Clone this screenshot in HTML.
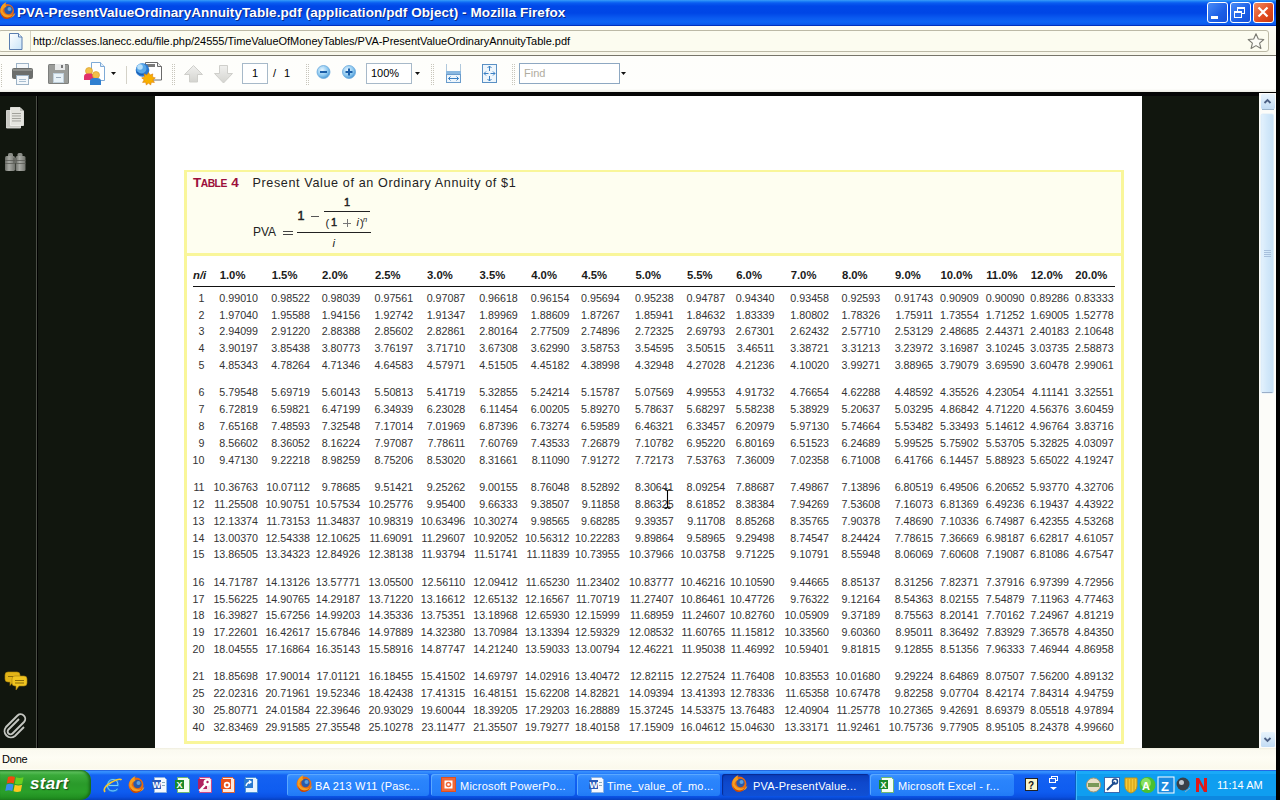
<!DOCTYPE html>
<html><head><meta charset="utf-8">
<style>
*{margin:0;padding:0;box-sizing:border-box}
html,body{width:1280px;height:800px;overflow:hidden;background:#000}
body{position:relative;font-family:"Liberation Sans",sans-serif}
.a{position:absolute}
/* title bar */
#title{left:0;top:0;width:1276px;height:26px;background:linear-gradient(#3a9ef8 0,#1a7cf6 1.5px,#0a5cf0 3px,#0048e8 6px,#0046e6 13px,#0a5af0 18px,#0d64f4 22px,#0a58ec 24.5px,#0032c0 25px,#0030b8 26px)}
#ttext{left:17px;top:4px;color:#fff;font-weight:bold;font-size:13.5px;line-height:17px;white-space:nowrap;text-shadow:1px 1px 0 #0a2a8a;letter-spacing:0.08px}
.wb{top:2px;width:21px;height:21px;border:1px solid #fff;border-radius:3px;background:linear-gradient(135deg,#4a8cf7,#1c5fe6 60%,#1650d8)}
#wclose{background:linear-gradient(135deg,#f08a60,#e04a20 60%,#c83a10)}
/* url area */
#urlarea{left:0;top:26px;width:1276px;height:30px;background:linear-gradient(#fdfdf6,#f8f7ea)}
#urlbox{left:-2px;top:30px;width:1271px;height:22px;border:1px solid #bcb9a6;border-radius:3px;background:#fcfcf0}
#urlsep{left:30px;top:31px;width:1px;height:20px;background:#d6d3c2}
#urltext{left:33px;top:35px;font-size:11px;color:#000;white-space:nowrap;letter-spacing:-0.03px}
#urlline{left:0;top:55px;width:1276px;height:1px;background:#77756a}
/* toolbar */
#toolbar{left:0;top:56px;width:1276px;height:36px;background:linear-gradient(#fefefb 0,#fefefc 33px,#f2f2ec 35px,#e8e8e0 36px)}
#blackband{left:0;top:92px;width:1276px;height:4px;background:#050505}
/* content */
#content{left:0;top:96px;width:1276px;height:652px;background:#11160e}
#sideline{left:36px;top:96px;width:1px;height:652px;background:#4a4d45}
#sideline2{left:37px;top:96px;width:1px;height:652px;background:#000}
#page{left:155px;top:96px;width:987px;height:652px;background:#fff}
#sbar{left:1259px;top:96px;width:17px;height:652px;background:#fdfdfa}
#status{left:0;top:748px;width:1276px;height:22px;background:linear-gradient(#efedde 0,#fbfaf0 2px,#fefdf4 10px,#fbf9ec 21px,#ffffff 22px)}
#done{left:2px;top:753px;font-size:11px;color:#000;letter-spacing:-0.2px}
#taskbar{left:0;top:770px;width:1276px;height:30px;background:linear-gradient(#0e40c8 0,#3a92ff 1px,#2c86fc 3px,#1462f2 5px,#0e5cf0 22px,#0a50e2 27px,#0640c0 30px)}
.tb{position:absolute;top:774px;height:22px;border-radius:3px;background:linear-gradient(#3e94ff,#2a84fc 30%,#2680fa 80%,#207af6);box-shadow:inset 1px 1px 0 #5aa8ff}
.tbt{position:absolute;top:779.5px;font-size:11px;letter-spacing:0.22px;line-height:13px;color:#fff;white-space:nowrap}
/* pdf */
#ybox{left:184px;top:170px;width:940px;height:574px;border:3px solid #f9f69a;background:#fff}
#yhead{left:187px;top:172px;width:934px;height:81px;background:#fefef0}
#ysep{left:187px;top:253px;width:934px;height:3px;background:#f9f69a}
.v,.n{position:absolute;width:60px;text-align:right;font-size:10.7px;line-height:12px;color:#333;white-space:nowrap}
.h{position:absolute;top:268.7px;font-size:11.3px;line-height:12px;font-weight:bold;color:#1a1a1a;white-space:nowrap}
#rule{left:193px;top:286px;width:922px;height:1px;background:#111}
</style></head><body>
<div id="title" class="a"></div>
<div id="ttext" class="a">PVA-PresentValueOrdinaryAnnuityTable.pdf (application/pdf Object) - Mozilla Firefox</div>
<div class="a wb" style="left:1207px"></div>
<div class="a wb" style="left:1230px"></div>
<div id="wclose" class="a wb" style="left:1253px"></div>

<div id="urlarea" class="a"></div>
<div id="urlbox" class="a"></div>
<div id="urlsep" class="a"></div>
<div id="urltext" class="a">http://classes.lanecc.edu/file.php/24555/TimeValueOfMoneyTables/PVA-PresentValueOrdinaryAnnuityTable.pdf</div>
<div id="urlline" class="a"></div>
<!-- title icons -->
<svg class="a" style="left:0;top:0" width="1276" height="56" viewBox="0 0 1276 56">
 <defs>
  <radialGradient id="gff" cx="0.45" cy="0.4" r="0.6"><stop offset="0" stop-color="#ffd24a"/><stop offset="0.6" stop-color="#f08a10"/><stop offset="1" stop-color="#c84a08"/></radialGradient>
  <linearGradient id="gdoc" x1="0" y1="0" x2="1" y2="1"><stop offset="0" stop-color="#ffffff"/><stop offset="1" stop-color="#c8e4f8"/></linearGradient>
 </defs>
 <circle cx="7" cy="11" r="7" fill="#e86a10"/>
 <circle cx="8.5" cy="10" r="4.2" fill="#2a5aa8"/>
 <circle cx="9.5" cy="9" r="2" fill="#5aa0e0"/>
 <path d="M0.5 9q1-5 6-7q-2 3 0 5q-3 0-4 4q2 4 7 4.5q4 0 6-3q-1 5-7 5.5q-6 0-8-6z" fill="#f4a020"/>
 <path d="M1 13q2 4 6 4.5q4 0 6.5-3.5q-1.5 4.5-6.5 5q-5 0-6-6z" fill="#c84808"/>
 <!-- window button glyphs -->
 <rect x="1211" y="16" width="7" height="3" fill="#fff"/>
 <rect x="1237.5" y="7.5" width="7" height="6" fill="none" stroke="#fff" stroke-width="1"/>
 <rect x="1237" y="7" width="8" height="2" fill="#fff"/>
 <rect x="1234.5" y="11.5" width="7" height="6" fill="#2a6ae8" stroke="#fff" stroke-width="1"/>
 <rect x="1234" y="11" width="8" height="2" fill="#fff"/>
 <path d="M1258.5 7.5l9 9M1267.5 7.5l-9 9" stroke="#fff" stroke-width="2.2"/>
 <!-- url page icon -->
 <path d="M9.5 33.5h9l3.5 3.5v12.5h-12.5z" fill="url(#gdoc)" stroke="#5a7eb0" stroke-width="1"/>
 <path d="M18.5 33.5v3.5h3.5" fill="#e8f0f8" stroke="#5a7eb0" stroke-width="1"/>
 <!-- star -->
 <path d="M1256 33.8l2.3 5.2 5.5.5-4.2 3.6 1.3 5.4-4.9-2.9-4.9 2.9 1.3-5.4-4.2-3.6 5.5-.5z" fill="#fbfbf6" stroke="#7a7a72" stroke-width="1.1" stroke-linejoin="round"/>
</svg>


<div id="toolbar" class="a"></div>
<div id="blackband" class="a"></div>
<!-- toolbar -->
<svg class="a" style="left:0;top:56px" width="640" height="36" viewBox="0 56 640 36">
 <defs>
  <linearGradient id="gblue" x1="0" y1="0" x2="0" y2="1"><stop offset="0" stop-color="#d8ecfb"/><stop offset="1" stop-color="#7fb6e6"/></linearGradient>
  <radialGradient id="gzoom" cx="0.4" cy="0.35" r="0.7"><stop offset="0" stop-color="#e8f6ff"/><stop offset="0.6" stop-color="#8cc8f0"/><stop offset="1" stop-color="#3f8fd0"/></radialGradient>
  <linearGradient id="garrow" x1="0" y1="0" x2="0" y2="1"><stop offset="0" stop-color="#f0f0ee"/><stop offset="1" stop-color="#d4d4d0"/></linearGradient>
 </defs>
 <!-- grip -->
 <g fill="#c6c4b8"><rect x="1" y="64" width="1" height="1"/><rect x="1" y="66" width="1" height="1"/><rect x="1" y="68" width="1" height="1"/><rect x="1" y="70" width="1" height="1"/><rect x="1" y="72" width="1" height="1"/><rect x="1" y="74" width="1" height="1"/><rect x="1" y="76" width="1" height="1"/><rect x="1" y="78" width="1" height="1"/><rect x="1" y="80" width="1" height="1"/><rect x="1" y="82" width="1" height="1"/><rect x="1" y="84" width="1" height="1"/><rect x="1" y="86" width="1" height="1"/></g>
 <!-- printer -->
 <rect x="16.5" y="63.5" width="12" height="7" fill="#f4f8fb" stroke="#9db3c6"/>
 <rect x="12" y="68" width="21" height="11" rx="2" fill="#6c6e6c"/>
 <rect x="13" y="69" width="19" height="2" fill="#8d8f8c"/>
 <rect x="16.5" y="75.5" width="12" height="9" fill="#f4f8fb" stroke="#9db3c6"/>
 <rect x="19" y="79" width="7" height="1" fill="#a9bfd1"/><rect x="19" y="81" width="7" height="1" fill="#a9bfd1"/>
 <!-- floppy -->
 <rect x="48" y="64" width="21" height="20" rx="1.5" fill="#7d7f7d"/>
 <rect x="49" y="65" width="19" height="18" fill="#9a9c99"/>
 <rect x="55" y="64" width="10" height="6" fill="#e8eaea"/><rect x="61" y="65" width="2" height="3" fill="#777"/>
 <rect x="53.5" y="73.5" width="10" height="9" fill="#e8f2f8" stroke="#c0d0dc"/>
 <rect x="56" y="77" width="5" height="1" fill="#9ab"/>
 <!-- share -->
 <path d="M91.5 62.5h9l4 4v14h-13z" fill="#fff" stroke="#7eaad6"/>
 <path d="M100.5 62.5v4h4" fill="#e0ecf8" stroke="#7eaad6"/>
 <circle cx="89" cy="71" r="3.5" fill="#f2c04a" stroke="#d69a20" stroke-width=".6"/>
 <path d="M84 80v-3.5q0-3 4-3h2q4 0 4 3v3.5z" fill="#e0306a"/>
 <circle cx="96" cy="75" r="3.5" fill="#f2c04a" stroke="#d69a20" stroke-width=".6"/>
 <path d="M90 85v-4q0-3 4-3h3q4 0 4 3v4z" fill="#2f7fd0"/>
 <path d="M111 72h5l-2.5 3z" fill="#111"/>
 <!-- separator -->
 <rect x="126" y="66" width="1" height="18" fill="#d4d2c8"/>
 <!-- globe doc -->
 <path d="M145.5 62.5h12l4 4v13.5h-16z" fill="#fff" stroke="#6a6a6a"/>
 <path d="M157.5 62.5v4h4" fill="#eee" stroke="#6a6a6a"/>
 <rect x="146" y="64" width="9" height="3" fill="#7a7a7a"/>
 <circle cx="142.5" cy="70" r="6.8" fill="#2a78d0"/>
 <circle cx="141.5" cy="68.5" r="5" fill="#5aa8e8"/>
 <circle cx="140" cy="67" r="2.8" fill="#b8e0fa"/>
 <path d="M136.5 72q3 3 7 2.5" fill="none" stroke="#1a5aa8" stroke-width="1"/>
 <path d="M148.5 72.5l1.5 2.6 2.8-1.2-.4 3 2.9 1-2.5 1.9 1.6 2.6-3-.2-.8 2.9-2.1-2.2-2.1 2.2-.8-2.9-3 .2 1.6-2.6-2.5-1.9 2.9-1-.4-3 2.8 1.2z" fill="#f7b000" stroke="#e07a00" stroke-width=".6"/>
 <!-- grip 2 -->
 <g fill="#c8c6bc">
 <rect x="172" y="64" width="1" height="1"/><rect x="172" y="66" width="1" height="1"/><rect x="172" y="68" width="1" height="1"/><rect x="172" y="70" width="1" height="1"/><rect x="172" y="72" width="1" height="1"/><rect x="172" y="74" width="1" height="1"/><rect x="172" y="76" width="1" height="1"/><rect x="172" y="78" width="1" height="1"/><rect x="172" y="80" width="1" height="1"/><rect x="172" y="82" width="1" height="1"/><rect x="172" y="84" width="1" height="1"/>
 <rect x="174" y="64" width="1" height="1"/><rect x="174" y="66" width="1" height="1"/><rect x="174" y="68" width="1" height="1"/><rect x="174" y="70" width="1" height="1"/><rect x="174" y="72" width="1" height="1"/><rect x="174" y="74" width="1" height="1"/><rect x="174" y="76" width="1" height="1"/><rect x="174" y="78" width="1" height="1"/><rect x="174" y="80" width="1" height="1"/><rect x="174" y="82" width="1" height="1"/><rect x="174" y="84" width="1" height="1"/>
 </g>
 <!-- up/down arrows -->
 <path d="M193.5 65.5l9 9h-5v7.5h-8v-7.5h-5z" fill="url(#garrow)" stroke="#cfcfcb"/>
 <path d="M219.5 65.5h8v8h5l-9 9.5-9-9.5h5z" fill="url(#garrow)" stroke="#cfcfcb"/>
 <!-- page box -->
 <rect x="242.5" y="63.5" width="25" height="20" fill="#fff" stroke="#a7b9c9"/>
 <!-- grip 3 -->
 <g fill="#c8c6bc">
 <rect x="306" y="64" width="1" height="1"/><rect x="306" y="66" width="1" height="1"/><rect x="306" y="68" width="1" height="1"/><rect x="306" y="70" width="1" height="1"/><rect x="306" y="72" width="1" height="1"/><rect x="306" y="74" width="1" height="1"/><rect x="306" y="76" width="1" height="1"/><rect x="306" y="78" width="1" height="1"/><rect x="306" y="80" width="1" height="1"/><rect x="306" y="82" width="1" height="1"/><rect x="306" y="84" width="1" height="1"/>
 <rect x="308" y="64" width="1" height="1"/><rect x="308" y="66" width="1" height="1"/><rect x="308" y="68" width="1" height="1"/><rect x="308" y="70" width="1" height="1"/><rect x="308" y="72" width="1" height="1"/><rect x="308" y="74" width="1" height="1"/><rect x="308" y="76" width="1" height="1"/><rect x="308" y="78" width="1" height="1"/><rect x="308" y="80" width="1" height="1"/><rect x="308" y="82" width="1" height="1"/><rect x="308" y="84" width="1" height="1"/>
 </g>
 <!-- zoom buttons -->
 <circle cx="323.5" cy="72" r="6.5" fill="url(#gzoom)" stroke="#6aa8dc" stroke-width=".8"/>
 <rect x="320" y="71" width="7" height="2" fill="#1a5ea8"/>
 <circle cx="349" cy="72" r="6.5" fill="url(#gzoom)" stroke="#6aa8dc" stroke-width=".8"/>
 <rect x="345.5" y="71" width="7" height="2" fill="#1a5ea8"/><rect x="348" y="68.5" width="2" height="7" fill="#1a5ea8"/>
 <!-- zoom box -->
 <rect x="366.5" y="63.5" width="45" height="20" fill="#fff" stroke="#a7b9c9"/>
 <path d="M415 72h5l-2.5 3z" fill="#111"/>
 <!-- grip 4 -->
 <g fill="#c8c6bc">
 <rect x="431" y="64" width="1" height="1"/><rect x="431" y="66" width="1" height="1"/><rect x="431" y="68" width="1" height="1"/><rect x="431" y="70" width="1" height="1"/><rect x="431" y="72" width="1" height="1"/><rect x="431" y="74" width="1" height="1"/><rect x="431" y="76" width="1" height="1"/><rect x="431" y="78" width="1" height="1"/><rect x="431" y="80" width="1" height="1"/><rect x="431" y="82" width="1" height="1"/><rect x="431" y="84" width="1" height="1"/>
 <rect x="433" y="64" width="1" height="1"/><rect x="433" y="66" width="1" height="1"/><rect x="433" y="68" width="1" height="1"/><rect x="433" y="70" width="1" height="1"/><rect x="433" y="72" width="1" height="1"/><rect x="433" y="74" width="1" height="1"/><rect x="433" y="76" width="1" height="1"/><rect x="433" y="78" width="1" height="1"/><rect x="433" y="80" width="1" height="1"/><rect x="433" y="82" width="1" height="1"/><rect x="433" y="84" width="1" height="1"/>
 </g>
 <!-- fit width -->
 <path d="M446.5 64v7.5h14v-7.5" fill="none" stroke="#b0c8dc"/>
 <rect x="446.5" y="74.5" width="14" height="8" fill="#eef6fc" stroke="#6a9ccc"/>
 <rect x="446" y="71" width="15" height="3" fill="#8ab8e0"/>
 <path d="M448.5 78.5h10M448.5 78.5l2 -2M448.5 78.5l2 2M458.5 78.5l-2-2M458.5 78.5l-2 2" stroke="#3a80c4" stroke-width="1"/>
 <!-- fit page -->
 <rect x="482.5" y="64.5" width="14" height="18" fill="#eef6fc" stroke="#5a90c4"/>
 <path d="M489.5 66v5M487.5 68l2-2 2 2M489.5 81v-5M487.5 79l2 2 2-2M484 73.5h4.5M486 71.5l-2 2 2 2M495 73.5h-4.5M493 71.5l2 2-2 2" fill="none" stroke="#3a80c4"/>
 <!-- grip 5 -->
 <g fill="#c8c6bc">
 <rect x="512" y="64" width="1" height="1"/><rect x="512" y="66" width="1" height="1"/><rect x="512" y="68" width="1" height="1"/><rect x="512" y="70" width="1" height="1"/><rect x="512" y="72" width="1" height="1"/><rect x="512" y="74" width="1" height="1"/><rect x="512" y="76" width="1" height="1"/><rect x="512" y="78" width="1" height="1"/><rect x="512" y="80" width="1" height="1"/><rect x="512" y="82" width="1" height="1"/><rect x="512" y="84" width="1" height="1"/>
 <rect x="514" y="64" width="1" height="1"/><rect x="514" y="66" width="1" height="1"/><rect x="514" y="68" width="1" height="1"/><rect x="514" y="70" width="1" height="1"/><rect x="514" y="72" width="1" height="1"/><rect x="514" y="74" width="1" height="1"/><rect x="514" y="76" width="1" height="1"/><rect x="514" y="78" width="1" height="1"/><rect x="514" y="80" width="1" height="1"/><rect x="514" y="82" width="1" height="1"/><rect x="514" y="84" width="1" height="1"/>
 </g>
 <!-- find box -->
 <rect x="519.5" y="63.5" width="100" height="20" fill="#fff" stroke="#8ea8c2"/>
 <path d="M621 72h5l-2.5 3z" fill="#111"/>
</svg>
<div class="a" style="left:252px;top:66px;font-size:11px;line-height:14px;color:#000">1</div>
<div class="a" style="left:273px;top:66px;font-size:11px;line-height:14px;color:#000">/</div>
<div class="a" style="left:284px;top:66px;font-size:11px;line-height:14px;color:#000">1</div>
<div class="a" style="left:371px;top:66px;font-size:11px;line-height:14px;color:#000">100%</div>
<div class="a" style="left:524px;top:66px;font-size:11px;line-height:14px;color:#b0aca0">Find</div>

<div id="content" class="a"></div>
<div id="sideline" class="a"></div>
<div id="sideline2" class="a"></div>
<div id="page" class="a"></div>

<!-- sidebar icons + scrollbar -->
<svg class="a" style="left:0;top:93px" width="1276" height="655" viewBox="0 93 1276 655">
 <defs>
  <linearGradient id="gthumb" x1="0" y1="0" x2="1" y2="0"><stop offset="0" stop-color="#e4f2fd"/><stop offset="0.5" stop-color="#d2e8fa"/><stop offset="1" stop-color="#c6e0f6"/></linearGradient>
  <linearGradient id="gsbtn" x1="0" y1="0" x2="0" y2="1"><stop offset="0" stop-color="#e8f3fc"/><stop offset="1" stop-color="#c2dcf4"/></linearGradient>
  <linearGradient id="gbin" x1="0" y1="0" x2="1" y2="0"><stop offset="0" stop-color="#6a6c66"/><stop offset="0.4" stop-color="#a8aaa4"/><stop offset="1" stop-color="#70726c"/></linearGradient>
 </defs>
 <!-- pages -->
 <path d="M6.5 110.5h11l3 3v14.5h-14z" fill="#c8c8c2" stroke="#e8e8e4" stroke-width=".8"/>
 <path d="M10.5 107.5h9.5l3.5 3.5v14.5h-13z" fill="#e4e4de" stroke="#f4f4f0" stroke-width=".8"/>
 <path d="M20 107.5v3.5h3.5" fill="#bcbcb6"/>
 <g fill="#9a9a94"><rect x="12" y="113" width="9" height=".9"/><rect x="12" y="115.5" width="9" height=".9"/><rect x="12" y="118" width="9" height=".9"/><rect x="12" y="120.5" width="9" height=".9"/></g>
 <!-- binoculars -->
 <rect x="8" y="153" width="5" height="4" rx="1.5" fill="#8a8c86"/>
 <rect x="17.5" y="153" width="5" height="4" rx="1.5" fill="#8a8c86"/>
 <rect x="5" y="156" width="10" height="15" rx="1.5" fill="url(#gbin)"/>
 <rect x="15.5" y="156" width="10" height="15" rx="1.5" fill="url(#gbin)"/>
 <rect x="13" y="158" width="4" height="5" fill="#6a6c66"/>
 <g fill="#5a5c56"><rect x="5" y="160" width="10" height=".8"/><rect x="15.5" y="160" width="10" height=".8"/><rect x="5" y="163" width="10" height=".8"/><rect x="15.5" y="163" width="10" height=".8"/></g>
 <!-- comments -->
 <path d="M5 675q0-3 3-3h9q3 0 3 3v4q0 3-3 3h-4l-3 3.5v-3.5h-2q-3 0-3-3z" fill="#e2b418" stroke="#b08808" stroke-width=".6"/>
 <path d="M12 679q0-3 3-3h9q3 0 3 3v4q0 3-3 3h-5l-3 4v-4h-1q-3 0-3-3z" fill="#f0c420" stroke="#a88010" stroke-width=".6"/>
 <rect x="15" y="680" width="9" height="1" fill="#8a6a08"/><rect x="15" y="682.5" width="9" height="1" fill="#8a6a08"/>
 <rect x="8" y="676" width="5" height="1" fill="#8a6a08"/>
 <!-- paperclip -->
 <path d="M19 719l-10.5 10.5a2.8 2.8 0 0 0 4 4l11.5-11.5a4.6 4.6 0 0 0-6.5-6.5l-11.5 11.5a6.4 6.4 0 0 0 9 9l9-9" fill="none" stroke="#c4c6c0" stroke-width="1.9"/>
 <!-- scrollbar -->
 <rect x="1259" y="93" width="17" height="655" fill="#fcfcf9"/>
 <rect x="1261" y="94" width="14" height="15" rx="1.5" fill="url(#gsbtn)"/>
 <rect x="1262" y="109" width="12" height="1" fill="#9bb4cc"/>
 <path d="M1264.5 103l3-3 3 3" fill="none" stroke="#4d6185" stroke-width="1.8"/>
 <rect x="1261" y="114" width="12.5" height="279" rx="1.5" fill="url(#gthumb)" stroke="#d8eaf8" stroke-width=".8"/>
 <rect x="1262" y="392" width="10.5" height="1" fill="#9aaec8"/>
 <g fill="#a8c0dc"><rect x="1264" y="250" width="7" height="1"/><rect x="1264" y="252" width="7" height="1"/><rect x="1264" y="254" width="7" height="1"/><rect x="1264" y="256" width="7" height="1"/></g>
 <rect x="1261" y="732" width="14" height="15" rx="1.5" fill="url(#gsbtn)"/>
 <path d="M1264.5 738l3 3 3-3" fill="none" stroke="#4d6185" stroke-width="1.8"/>
</svg>


<div id="ybox" class="a"></div>
<div id="yhead" class="a"></div>
<div id="ysep" class="a"></div>
<div id="rule" class="a"></div>
<div class="a" id="tab4" style="left:193px;top:175px;font-size:13.5px;line-height:16px;font-weight:bold;color:#a3123f;white-space:nowrap;letter-spacing:-0.5px;color:#9c0f3a">T<span style="font-size:10.3px">ABLE</span><span style="margin-left:4.5px">4</span></div>
<div class="a" id="ptitle" style="left:252.5px;top:175px;font-size:12.6px;line-height:16px;color:#222;white-space:nowrap;letter-spacing:0.62px">Present Value of an Ordinary Annuity of $1</div>
<div class="a" id="pva" style="left:253px;top:225px;font-size:12px;line-height:14px;color:#222;white-space:nowrap">PVA</div>
<div class="a" style="left:283px;top:231px;width:10px;height:1px;background:#444"></div>
<div class="a" style="left:283px;top:234px;width:10px;height:1px;background:#444"></div>
<div class="a" style="left:297px;top:232px;width:74px;height:1px;background:#222"></div>
<div class="a" style="left:297.5px;top:209px;font-size:12.5px;line-height:14px;color:#222;-webkit-text-stroke:0.5px #222">1</div>
<div class="a" style="left:311px;top:216px;width:8px;height:1px;background:#555"></div>
<div class="a" style="left:324px;top:211px;width:46px;height:1px;background:#222"></div>
<div class="a" style="left:344px;top:196px;font-size:11px;line-height:12px;color:#222;-webkit-text-stroke:0.45px #222">1</div>
<div class="a" style="left:325.5px;top:216px;font-size:11px;line-height:14px;color:#222">(</div>
<div class="a" style="left:331px;top:215px;font-size:11px;line-height:14px;color:#222;-webkit-text-stroke:0.45px #222">1</div>
<div class="a" style="left:343px;top:222.5px;width:8px;height:1px;background:#777"></div><div class="a" style="left:346.5px;top:219px;width:1px;height:8px;background:#777"></div>
<div class="a" style="left:356.5px;top:215px;font-size:11px;line-height:14px;color:#222;font-style:italic">i</div>
<div class="a" style="left:360px;top:216px;font-size:11px;line-height:14px;color:#222">)</div>
<div class="a" style="left:363px;top:215.5px;font-size:7.5px;line-height:8px;color:#222;font-style:italic">n</div>
<div class="a" style="left:332.5px;top:236.5px;font-size:11.5px;line-height:12px;color:#222;font-style:italic">i</div>
<div class="h" style="left:193px;font-style:italic">n/i</div>
<div class="n" style="top:291.70px;left:144.5px">1</div>
<div class="v" style="top:291.70px;left:198.0px">0.99010</div>
<div class="v" style="top:291.70px;left:250.0px">0.98522</div>
<div class="v" style="top:291.70px;left:300.3px">0.98039</div>
<div class="v" style="top:291.70px;left:353.2px">0.97561</div>
<div class="v" style="top:291.70px;left:405.3px">0.97087</div>
<div class="v" style="top:291.70px;left:457.8px">0.96618</div>
<div class="v" style="top:291.70px;left:509.5px">0.96154</div>
<div class="v" style="top:291.70px;left:559.7px">0.95694</div>
<div class="v" style="top:291.70px;left:613.7px">0.95238</div>
<div class="v" style="top:291.70px;left:665.2px">0.94787</div>
<div class="v" style="top:291.70px;left:714.5px">0.94340</div>
<div class="v" style="top:291.70px;left:769.0px">0.93458</div>
<div class="v" style="top:291.70px;left:820.2px">0.92593</div>
<div class="v" style="top:291.70px;left:873.3px">0.91743</div>
<div class="v" style="top:291.70px;left:918.7px">0.90909</div>
<div class="v" style="top:291.70px;left:964.5px">0.90090</div>
<div class="v" style="top:291.70px;left:1009.0px">0.89286</div>
<div class="v" style="top:291.70px;left:1053.6px">0.83333</div>
<div class="n" style="top:308.55px;left:144.5px">2</div>
<div class="v" style="top:308.55px;left:198.0px">1.97040</div>
<div class="v" style="top:308.55px;left:250.0px">1.95588</div>
<div class="v" style="top:308.55px;left:300.3px">1.94156</div>
<div class="v" style="top:308.55px;left:353.2px">1.92742</div>
<div class="v" style="top:308.55px;left:405.3px">1.91347</div>
<div class="v" style="top:308.55px;left:457.8px">1.89969</div>
<div class="v" style="top:308.55px;left:509.5px">1.88609</div>
<div class="v" style="top:308.55px;left:559.7px">1.87267</div>
<div class="v" style="top:308.55px;left:613.7px">1.85941</div>
<div class="v" style="top:308.55px;left:665.2px">1.84632</div>
<div class="v" style="top:308.55px;left:714.5px">1.83339</div>
<div class="v" style="top:308.55px;left:769.0px">1.80802</div>
<div class="v" style="top:308.55px;left:820.2px">1.78326</div>
<div class="v" style="top:308.55px;left:873.3px">1.75911</div>
<div class="v" style="top:308.55px;left:918.7px">1.73554</div>
<div class="v" style="top:308.55px;left:964.5px">1.71252</div>
<div class="v" style="top:308.55px;left:1009.0px">1.69005</div>
<div class="v" style="top:308.55px;left:1053.6px">1.52778</div>
<div class="n" style="top:325.40px;left:144.5px">3</div>
<div class="v" style="top:325.40px;left:198.0px">2.94099</div>
<div class="v" style="top:325.40px;left:250.0px">2.91220</div>
<div class="v" style="top:325.40px;left:300.3px">2.88388</div>
<div class="v" style="top:325.40px;left:353.2px">2.85602</div>
<div class="v" style="top:325.40px;left:405.3px">2.82861</div>
<div class="v" style="top:325.40px;left:457.8px">2.80164</div>
<div class="v" style="top:325.40px;left:509.5px">2.77509</div>
<div class="v" style="top:325.40px;left:559.7px">2.74896</div>
<div class="v" style="top:325.40px;left:613.7px">2.72325</div>
<div class="v" style="top:325.40px;left:665.2px">2.69793</div>
<div class="v" style="top:325.40px;left:714.5px">2.67301</div>
<div class="v" style="top:325.40px;left:769.0px">2.62432</div>
<div class="v" style="top:325.40px;left:820.2px">2.57710</div>
<div class="v" style="top:325.40px;left:873.3px">2.53129</div>
<div class="v" style="top:325.40px;left:918.7px">2.48685</div>
<div class="v" style="top:325.40px;left:964.5px">2.44371</div>
<div class="v" style="top:325.40px;left:1009.0px">2.40183</div>
<div class="v" style="top:325.40px;left:1053.6px">2.10648</div>
<div class="n" style="top:342.25px;left:144.5px">4</div>
<div class="v" style="top:342.25px;left:198.0px">3.90197</div>
<div class="v" style="top:342.25px;left:250.0px">3.85438</div>
<div class="v" style="top:342.25px;left:300.3px">3.80773</div>
<div class="v" style="top:342.25px;left:353.2px">3.76197</div>
<div class="v" style="top:342.25px;left:405.3px">3.71710</div>
<div class="v" style="top:342.25px;left:457.8px">3.67308</div>
<div class="v" style="top:342.25px;left:509.5px">3.62990</div>
<div class="v" style="top:342.25px;left:559.7px">3.58753</div>
<div class="v" style="top:342.25px;left:613.7px">3.54595</div>
<div class="v" style="top:342.25px;left:665.2px">3.50515</div>
<div class="v" style="top:342.25px;left:714.5px">3.46511</div>
<div class="v" style="top:342.25px;left:769.0px">3.38721</div>
<div class="v" style="top:342.25px;left:820.2px">3.31213</div>
<div class="v" style="top:342.25px;left:873.3px">3.23972</div>
<div class="v" style="top:342.25px;left:918.7px">3.16987</div>
<div class="v" style="top:342.25px;left:964.5px">3.10245</div>
<div class="v" style="top:342.25px;left:1009.0px">3.03735</div>
<div class="v" style="top:342.25px;left:1053.6px">2.58873</div>
<div class="n" style="top:359.10px;left:144.5px">5</div>
<div class="v" style="top:359.10px;left:198.0px">4.85343</div>
<div class="v" style="top:359.10px;left:250.0px">4.78264</div>
<div class="v" style="top:359.10px;left:300.3px">4.71346</div>
<div class="v" style="top:359.10px;left:353.2px">4.64583</div>
<div class="v" style="top:359.10px;left:405.3px">4.57971</div>
<div class="v" style="top:359.10px;left:457.8px">4.51505</div>
<div class="v" style="top:359.10px;left:509.5px">4.45182</div>
<div class="v" style="top:359.10px;left:559.7px">4.38998</div>
<div class="v" style="top:359.10px;left:613.7px">4.32948</div>
<div class="v" style="top:359.10px;left:665.2px">4.27028</div>
<div class="v" style="top:359.10px;left:714.5px">4.21236</div>
<div class="v" style="top:359.10px;left:769.0px">4.10020</div>
<div class="v" style="top:359.10px;left:820.2px">3.99271</div>
<div class="v" style="top:359.10px;left:873.3px">3.88965</div>
<div class="v" style="top:359.10px;left:918.7px">3.79079</div>
<div class="v" style="top:359.10px;left:964.5px">3.69590</div>
<div class="v" style="top:359.10px;left:1009.0px">3.60478</div>
<div class="v" style="top:359.10px;left:1053.6px">2.99061</div>
<div class="n" style="top:386.35px;left:144.5px">6</div>
<div class="v" style="top:386.35px;left:198.0px">5.79548</div>
<div class="v" style="top:386.35px;left:250.0px">5.69719</div>
<div class="v" style="top:386.35px;left:300.3px">5.60143</div>
<div class="v" style="top:386.35px;left:353.2px">5.50813</div>
<div class="v" style="top:386.35px;left:405.3px">5.41719</div>
<div class="v" style="top:386.35px;left:457.8px">5.32855</div>
<div class="v" style="top:386.35px;left:509.5px">5.24214</div>
<div class="v" style="top:386.35px;left:559.7px">5.15787</div>
<div class="v" style="top:386.35px;left:613.7px">5.07569</div>
<div class="v" style="top:386.35px;left:665.2px">4.99553</div>
<div class="v" style="top:386.35px;left:714.5px">4.91732</div>
<div class="v" style="top:386.35px;left:769.0px">4.76654</div>
<div class="v" style="top:386.35px;left:820.2px">4.62288</div>
<div class="v" style="top:386.35px;left:873.3px">4.48592</div>
<div class="v" style="top:386.35px;left:918.7px">4.35526</div>
<div class="v" style="top:386.35px;left:964.5px">4.23054</div>
<div class="v" style="top:386.35px;left:1009.0px">4.11141</div>
<div class="v" style="top:386.35px;left:1053.6px">3.32551</div>
<div class="n" style="top:403.20px;left:144.5px">7</div>
<div class="v" style="top:403.20px;left:198.0px">6.72819</div>
<div class="v" style="top:403.20px;left:250.0px">6.59821</div>
<div class="v" style="top:403.20px;left:300.3px">6.47199</div>
<div class="v" style="top:403.20px;left:353.2px">6.34939</div>
<div class="v" style="top:403.20px;left:405.3px">6.23028</div>
<div class="v" style="top:403.20px;left:457.8px">6.11454</div>
<div class="v" style="top:403.20px;left:509.5px">6.00205</div>
<div class="v" style="top:403.20px;left:559.7px">5.89270</div>
<div class="v" style="top:403.20px;left:613.7px">5.78637</div>
<div class="v" style="top:403.20px;left:665.2px">5.68297</div>
<div class="v" style="top:403.20px;left:714.5px">5.58238</div>
<div class="v" style="top:403.20px;left:769.0px">5.38929</div>
<div class="v" style="top:403.20px;left:820.2px">5.20637</div>
<div class="v" style="top:403.20px;left:873.3px">5.03295</div>
<div class="v" style="top:403.20px;left:918.7px">4.86842</div>
<div class="v" style="top:403.20px;left:964.5px">4.71220</div>
<div class="v" style="top:403.20px;left:1009.0px">4.56376</div>
<div class="v" style="top:403.20px;left:1053.6px">3.60459</div>
<div class="n" style="top:420.05px;left:144.5px">8</div>
<div class="v" style="top:420.05px;left:198.0px">7.65168</div>
<div class="v" style="top:420.05px;left:250.0px">7.48593</div>
<div class="v" style="top:420.05px;left:300.3px">7.32548</div>
<div class="v" style="top:420.05px;left:353.2px">7.17014</div>
<div class="v" style="top:420.05px;left:405.3px">7.01969</div>
<div class="v" style="top:420.05px;left:457.8px">6.87396</div>
<div class="v" style="top:420.05px;left:509.5px">6.73274</div>
<div class="v" style="top:420.05px;left:559.7px">6.59589</div>
<div class="v" style="top:420.05px;left:613.7px">6.46321</div>
<div class="v" style="top:420.05px;left:665.2px">6.33457</div>
<div class="v" style="top:420.05px;left:714.5px">6.20979</div>
<div class="v" style="top:420.05px;left:769.0px">5.97130</div>
<div class="v" style="top:420.05px;left:820.2px">5.74664</div>
<div class="v" style="top:420.05px;left:873.3px">5.53482</div>
<div class="v" style="top:420.05px;left:918.7px">5.33493</div>
<div class="v" style="top:420.05px;left:964.5px">5.14612</div>
<div class="v" style="top:420.05px;left:1009.0px">4.96764</div>
<div class="v" style="top:420.05px;left:1053.6px">3.83716</div>
<div class="n" style="top:436.90px;left:144.5px">9</div>
<div class="v" style="top:436.90px;left:198.0px">8.56602</div>
<div class="v" style="top:436.90px;left:250.0px">8.36052</div>
<div class="v" style="top:436.90px;left:300.3px">8.16224</div>
<div class="v" style="top:436.90px;left:353.2px">7.97087</div>
<div class="v" style="top:436.90px;left:405.3px">7.78611</div>
<div class="v" style="top:436.90px;left:457.8px">7.60769</div>
<div class="v" style="top:436.90px;left:509.5px">7.43533</div>
<div class="v" style="top:436.90px;left:559.7px">7.26879</div>
<div class="v" style="top:436.90px;left:613.7px">7.10782</div>
<div class="v" style="top:436.90px;left:665.2px">6.95220</div>
<div class="v" style="top:436.90px;left:714.5px">6.80169</div>
<div class="v" style="top:436.90px;left:769.0px">6.51523</div>
<div class="v" style="top:436.90px;left:820.2px">6.24689</div>
<div class="v" style="top:436.90px;left:873.3px">5.99525</div>
<div class="v" style="top:436.90px;left:918.7px">5.75902</div>
<div class="v" style="top:436.90px;left:964.5px">5.53705</div>
<div class="v" style="top:436.90px;left:1009.0px">5.32825</div>
<div class="v" style="top:436.90px;left:1053.6px">4.03097</div>
<div class="n" style="top:453.75px;left:144.5px">10</div>
<div class="v" style="top:453.75px;left:198.0px">9.47130</div>
<div class="v" style="top:453.75px;left:250.0px">9.22218</div>
<div class="v" style="top:453.75px;left:300.3px">8.98259</div>
<div class="v" style="top:453.75px;left:353.2px">8.75206</div>
<div class="v" style="top:453.75px;left:405.3px">8.53020</div>
<div class="v" style="top:453.75px;left:457.8px">8.31661</div>
<div class="v" style="top:453.75px;left:509.5px">8.11090</div>
<div class="v" style="top:453.75px;left:559.7px">7.91272</div>
<div class="v" style="top:453.75px;left:613.7px">7.72173</div>
<div class="v" style="top:453.75px;left:665.2px">7.53763</div>
<div class="v" style="top:453.75px;left:714.5px">7.36009</div>
<div class="v" style="top:453.75px;left:769.0px">7.02358</div>
<div class="v" style="top:453.75px;left:820.2px">6.71008</div>
<div class="v" style="top:453.75px;left:873.3px">6.41766</div>
<div class="v" style="top:453.75px;left:918.7px">6.14457</div>
<div class="v" style="top:453.75px;left:964.5px">5.88923</div>
<div class="v" style="top:453.75px;left:1009.0px">5.65022</div>
<div class="v" style="top:453.75px;left:1053.6px">4.19247</div>
<div class="n" style="top:481.00px;left:144.5px">11</div>
<div class="v" style="top:481.00px;left:198.0px">10.36763</div>
<div class="v" style="top:481.00px;left:250.0px">10.07112</div>
<div class="v" style="top:481.00px;left:300.3px">9.78685</div>
<div class="v" style="top:481.00px;left:353.2px">9.51421</div>
<div class="v" style="top:481.00px;left:405.3px">9.25262</div>
<div class="v" style="top:481.00px;left:457.8px">9.00155</div>
<div class="v" style="top:481.00px;left:509.5px">8.76048</div>
<div class="v" style="top:481.00px;left:559.7px">8.52892</div>
<div class="v" style="top:481.00px;left:613.7px">8.30641</div>
<div class="v" style="top:481.00px;left:665.2px">8.09254</div>
<div class="v" style="top:481.00px;left:714.5px">7.88687</div>
<div class="v" style="top:481.00px;left:769.0px">7.49867</div>
<div class="v" style="top:481.00px;left:820.2px">7.13896</div>
<div class="v" style="top:481.00px;left:873.3px">6.80519</div>
<div class="v" style="top:481.00px;left:918.7px">6.49506</div>
<div class="v" style="top:481.00px;left:964.5px">6.20652</div>
<div class="v" style="top:481.00px;left:1009.0px">5.93770</div>
<div class="v" style="top:481.00px;left:1053.6px">4.32706</div>
<div class="n" style="top:497.85px;left:144.5px">12</div>
<div class="v" style="top:497.85px;left:198.0px">11.25508</div>
<div class="v" style="top:497.85px;left:250.0px">10.90751</div>
<div class="v" style="top:497.85px;left:300.3px">10.57534</div>
<div class="v" style="top:497.85px;left:353.2px">10.25776</div>
<div class="v" style="top:497.85px;left:405.3px">9.95400</div>
<div class="v" style="top:497.85px;left:457.8px">9.66333</div>
<div class="v" style="top:497.85px;left:509.5px">9.38507</div>
<div class="v" style="top:497.85px;left:559.7px">9.11858</div>
<div class="v" style="top:497.85px;left:613.7px">8.86325</div>
<div class="v" style="top:497.85px;left:665.2px">8.61852</div>
<div class="v" style="top:497.85px;left:714.5px">8.38384</div>
<div class="v" style="top:497.85px;left:769.0px">7.94269</div>
<div class="v" style="top:497.85px;left:820.2px">7.53608</div>
<div class="v" style="top:497.85px;left:873.3px">7.16073</div>
<div class="v" style="top:497.85px;left:918.7px">6.81369</div>
<div class="v" style="top:497.85px;left:964.5px">6.49236</div>
<div class="v" style="top:497.85px;left:1009.0px">6.19437</div>
<div class="v" style="top:497.85px;left:1053.6px">4.43922</div>
<div class="n" style="top:514.70px;left:144.5px">13</div>
<div class="v" style="top:514.70px;left:198.0px">12.13374</div>
<div class="v" style="top:514.70px;left:250.0px">11.73153</div>
<div class="v" style="top:514.70px;left:300.3px">11.34837</div>
<div class="v" style="top:514.70px;left:353.2px">10.98319</div>
<div class="v" style="top:514.70px;left:405.3px">10.63496</div>
<div class="v" style="top:514.70px;left:457.8px">10.30274</div>
<div class="v" style="top:514.70px;left:509.5px">9.98565</div>
<div class="v" style="top:514.70px;left:559.7px">9.68285</div>
<div class="v" style="top:514.70px;left:613.7px">9.39357</div>
<div class="v" style="top:514.70px;left:665.2px">9.11708</div>
<div class="v" style="top:514.70px;left:714.5px">8.85268</div>
<div class="v" style="top:514.70px;left:769.0px">8.35765</div>
<div class="v" style="top:514.70px;left:820.2px">7.90378</div>
<div class="v" style="top:514.70px;left:873.3px">7.48690</div>
<div class="v" style="top:514.70px;left:918.7px">7.10336</div>
<div class="v" style="top:514.70px;left:964.5px">6.74987</div>
<div class="v" style="top:514.70px;left:1009.0px">6.42355</div>
<div class="v" style="top:514.70px;left:1053.6px">4.53268</div>
<div class="n" style="top:531.55px;left:144.5px">14</div>
<div class="v" style="top:531.55px;left:198.0px">13.00370</div>
<div class="v" style="top:531.55px;left:250.0px">12.54338</div>
<div class="v" style="top:531.55px;left:300.3px">12.10625</div>
<div class="v" style="top:531.55px;left:353.2px">11.69091</div>
<div class="v" style="top:531.55px;left:405.3px">11.29607</div>
<div class="v" style="top:531.55px;left:457.8px">10.92052</div>
<div class="v" style="top:531.55px;left:509.5px">10.56312</div>
<div class="v" style="top:531.55px;left:559.7px">10.22283</div>
<div class="v" style="top:531.55px;left:613.7px">9.89864</div>
<div class="v" style="top:531.55px;left:665.2px">9.58965</div>
<div class="v" style="top:531.55px;left:714.5px">9.29498</div>
<div class="v" style="top:531.55px;left:769.0px">8.74547</div>
<div class="v" style="top:531.55px;left:820.2px">8.24424</div>
<div class="v" style="top:531.55px;left:873.3px">7.78615</div>
<div class="v" style="top:531.55px;left:918.7px">7.36669</div>
<div class="v" style="top:531.55px;left:964.5px">6.98187</div>
<div class="v" style="top:531.55px;left:1009.0px">6.62817</div>
<div class="v" style="top:531.55px;left:1053.6px">4.61057</div>
<div class="n" style="top:548.40px;left:144.5px">15</div>
<div class="v" style="top:548.40px;left:198.0px">13.86505</div>
<div class="v" style="top:548.40px;left:250.0px">13.34323</div>
<div class="v" style="top:548.40px;left:300.3px">12.84926</div>
<div class="v" style="top:548.40px;left:353.2px">12.38138</div>
<div class="v" style="top:548.40px;left:405.3px">11.93794</div>
<div class="v" style="top:548.40px;left:457.8px">11.51741</div>
<div class="v" style="top:548.40px;left:509.5px">11.11839</div>
<div class="v" style="top:548.40px;left:559.7px">10.73955</div>
<div class="v" style="top:548.40px;left:613.7px">10.37966</div>
<div class="v" style="top:548.40px;left:665.2px">10.03758</div>
<div class="v" style="top:548.40px;left:714.5px">9.71225</div>
<div class="v" style="top:548.40px;left:769.0px">9.10791</div>
<div class="v" style="top:548.40px;left:820.2px">8.55948</div>
<div class="v" style="top:548.40px;left:873.3px">8.06069</div>
<div class="v" style="top:548.40px;left:918.7px">7.60608</div>
<div class="v" style="top:548.40px;left:964.5px">7.19087</div>
<div class="v" style="top:548.40px;left:1009.0px">6.81086</div>
<div class="v" style="top:548.40px;left:1053.6px">4.67547</div>
<div class="n" style="top:575.65px;left:144.5px">16</div>
<div class="v" style="top:575.65px;left:198.0px">14.71787</div>
<div class="v" style="top:575.65px;left:250.0px">14.13126</div>
<div class="v" style="top:575.65px;left:300.3px">13.57771</div>
<div class="v" style="top:575.65px;left:353.2px">13.05500</div>
<div class="v" style="top:575.65px;left:405.3px">12.56110</div>
<div class="v" style="top:575.65px;left:457.8px">12.09412</div>
<div class="v" style="top:575.65px;left:509.5px">11.65230</div>
<div class="v" style="top:575.65px;left:559.7px">11.23402</div>
<div class="v" style="top:575.65px;left:613.7px">10.83777</div>
<div class="v" style="top:575.65px;left:665.2px">10.46216</div>
<div class="v" style="top:575.65px;left:714.5px">10.10590</div>
<div class="v" style="top:575.65px;left:769.0px">9.44665</div>
<div class="v" style="top:575.65px;left:820.2px">8.85137</div>
<div class="v" style="top:575.65px;left:873.3px">8.31256</div>
<div class="v" style="top:575.65px;left:918.7px">7.82371</div>
<div class="v" style="top:575.65px;left:964.5px">7.37916</div>
<div class="v" style="top:575.65px;left:1009.0px">6.97399</div>
<div class="v" style="top:575.65px;left:1053.6px">4.72956</div>
<div class="n" style="top:592.50px;left:144.5px">17</div>
<div class="v" style="top:592.50px;left:198.0px">15.56225</div>
<div class="v" style="top:592.50px;left:250.0px">14.90765</div>
<div class="v" style="top:592.50px;left:300.3px">14.29187</div>
<div class="v" style="top:592.50px;left:353.2px">13.71220</div>
<div class="v" style="top:592.50px;left:405.3px">13.16612</div>
<div class="v" style="top:592.50px;left:457.8px">12.65132</div>
<div class="v" style="top:592.50px;left:509.5px">12.16567</div>
<div class="v" style="top:592.50px;left:559.7px">11.70719</div>
<div class="v" style="top:592.50px;left:613.7px">11.27407</div>
<div class="v" style="top:592.50px;left:665.2px">10.86461</div>
<div class="v" style="top:592.50px;left:714.5px">10.47726</div>
<div class="v" style="top:592.50px;left:769.0px">9.76322</div>
<div class="v" style="top:592.50px;left:820.2px">9.12164</div>
<div class="v" style="top:592.50px;left:873.3px">8.54363</div>
<div class="v" style="top:592.50px;left:918.7px">8.02155</div>
<div class="v" style="top:592.50px;left:964.5px">7.54879</div>
<div class="v" style="top:592.50px;left:1009.0px">7.11963</div>
<div class="v" style="top:592.50px;left:1053.6px">4.77463</div>
<div class="n" style="top:609.35px;left:144.5px">18</div>
<div class="v" style="top:609.35px;left:198.0px">16.39827</div>
<div class="v" style="top:609.35px;left:250.0px">15.67256</div>
<div class="v" style="top:609.35px;left:300.3px">14.99203</div>
<div class="v" style="top:609.35px;left:353.2px">14.35336</div>
<div class="v" style="top:609.35px;left:405.3px">13.75351</div>
<div class="v" style="top:609.35px;left:457.8px">13.18968</div>
<div class="v" style="top:609.35px;left:509.5px">12.65930</div>
<div class="v" style="top:609.35px;left:559.7px">12.15999</div>
<div class="v" style="top:609.35px;left:613.7px">11.68959</div>
<div class="v" style="top:609.35px;left:665.2px">11.24607</div>
<div class="v" style="top:609.35px;left:714.5px">10.82760</div>
<div class="v" style="top:609.35px;left:769.0px">10.05909</div>
<div class="v" style="top:609.35px;left:820.2px">9.37189</div>
<div class="v" style="top:609.35px;left:873.3px">8.75563</div>
<div class="v" style="top:609.35px;left:918.7px">8.20141</div>
<div class="v" style="top:609.35px;left:964.5px">7.70162</div>
<div class="v" style="top:609.35px;left:1009.0px">7.24967</div>
<div class="v" style="top:609.35px;left:1053.6px">4.81219</div>
<div class="n" style="top:626.20px;left:144.5px">19</div>
<div class="v" style="top:626.20px;left:198.0px">17.22601</div>
<div class="v" style="top:626.20px;left:250.0px">16.42617</div>
<div class="v" style="top:626.20px;left:300.3px">15.67846</div>
<div class="v" style="top:626.20px;left:353.2px">14.97889</div>
<div class="v" style="top:626.20px;left:405.3px">14.32380</div>
<div class="v" style="top:626.20px;left:457.8px">13.70984</div>
<div class="v" style="top:626.20px;left:509.5px">13.13394</div>
<div class="v" style="top:626.20px;left:559.7px">12.59329</div>
<div class="v" style="top:626.20px;left:613.7px">12.08532</div>
<div class="v" style="top:626.20px;left:665.2px">11.60765</div>
<div class="v" style="top:626.20px;left:714.5px">11.15812</div>
<div class="v" style="top:626.20px;left:769.0px">10.33560</div>
<div class="v" style="top:626.20px;left:820.2px">9.60360</div>
<div class="v" style="top:626.20px;left:873.3px">8.95011</div>
<div class="v" style="top:626.20px;left:918.7px">8.36492</div>
<div class="v" style="top:626.20px;left:964.5px">7.83929</div>
<div class="v" style="top:626.20px;left:1009.0px">7.36578</div>
<div class="v" style="top:626.20px;left:1053.6px">4.84350</div>
<div class="n" style="top:643.05px;left:144.5px">20</div>
<div class="v" style="top:643.05px;left:198.0px">18.04555</div>
<div class="v" style="top:643.05px;left:250.0px">17.16864</div>
<div class="v" style="top:643.05px;left:300.3px">16.35143</div>
<div class="v" style="top:643.05px;left:353.2px">15.58916</div>
<div class="v" style="top:643.05px;left:405.3px">14.87747</div>
<div class="v" style="top:643.05px;left:457.8px">14.21240</div>
<div class="v" style="top:643.05px;left:509.5px">13.59033</div>
<div class="v" style="top:643.05px;left:559.7px">13.00794</div>
<div class="v" style="top:643.05px;left:613.7px">12.46221</div>
<div class="v" style="top:643.05px;left:665.2px">11.95038</div>
<div class="v" style="top:643.05px;left:714.5px">11.46992</div>
<div class="v" style="top:643.05px;left:769.0px">10.59401</div>
<div class="v" style="top:643.05px;left:820.2px">9.81815</div>
<div class="v" style="top:643.05px;left:873.3px">9.12855</div>
<div class="v" style="top:643.05px;left:918.7px">8.51356</div>
<div class="v" style="top:643.05px;left:964.5px">7.96333</div>
<div class="v" style="top:643.05px;left:1009.0px">7.46944</div>
<div class="v" style="top:643.05px;left:1053.6px">4.86958</div>
<div class="n" style="top:670.30px;left:144.5px">21</div>
<div class="v" style="top:670.30px;left:198.0px">18.85698</div>
<div class="v" style="top:670.30px;left:250.0px">17.90014</div>
<div class="v" style="top:670.30px;left:300.3px">17.01121</div>
<div class="v" style="top:670.30px;left:353.2px">16.18455</div>
<div class="v" style="top:670.30px;left:405.3px">15.41502</div>
<div class="v" style="top:670.30px;left:457.8px">14.69797</div>
<div class="v" style="top:670.30px;left:509.5px">14.02916</div>
<div class="v" style="top:670.30px;left:559.7px">13.40472</div>
<div class="v" style="top:670.30px;left:613.7px">12.82115</div>
<div class="v" style="top:670.30px;left:665.2px">12.27524</div>
<div class="v" style="top:670.30px;left:714.5px">11.76408</div>
<div class="v" style="top:670.30px;left:769.0px">10.83553</div>
<div class="v" style="top:670.30px;left:820.2px">10.01680</div>
<div class="v" style="top:670.30px;left:873.3px">9.29224</div>
<div class="v" style="top:670.30px;left:918.7px">8.64869</div>
<div class="v" style="top:670.30px;left:964.5px">8.07507</div>
<div class="v" style="top:670.30px;left:1009.0px">7.56200</div>
<div class="v" style="top:670.30px;left:1053.6px">4.89132</div>
<div class="n" style="top:687.15px;left:144.5px">25</div>
<div class="v" style="top:687.15px;left:198.0px">22.02316</div>
<div class="v" style="top:687.15px;left:250.0px">20.71961</div>
<div class="v" style="top:687.15px;left:300.3px">19.52346</div>
<div class="v" style="top:687.15px;left:353.2px">18.42438</div>
<div class="v" style="top:687.15px;left:405.3px">17.41315</div>
<div class="v" style="top:687.15px;left:457.8px">16.48151</div>
<div class="v" style="top:687.15px;left:509.5px">15.62208</div>
<div class="v" style="top:687.15px;left:559.7px">14.82821</div>
<div class="v" style="top:687.15px;left:613.7px">14.09394</div>
<div class="v" style="top:687.15px;left:665.2px">13.41393</div>
<div class="v" style="top:687.15px;left:714.5px">12.78336</div>
<div class="v" style="top:687.15px;left:769.0px">11.65358</div>
<div class="v" style="top:687.15px;left:820.2px">10.67478</div>
<div class="v" style="top:687.15px;left:873.3px">9.82258</div>
<div class="v" style="top:687.15px;left:918.7px">9.07704</div>
<div class="v" style="top:687.15px;left:964.5px">8.42174</div>
<div class="v" style="top:687.15px;left:1009.0px">7.84314</div>
<div class="v" style="top:687.15px;left:1053.6px">4.94759</div>
<div class="n" style="top:704.00px;left:144.5px">30</div>
<div class="v" style="top:704.00px;left:198.0px">25.80771</div>
<div class="v" style="top:704.00px;left:250.0px">24.01584</div>
<div class="v" style="top:704.00px;left:300.3px">22.39646</div>
<div class="v" style="top:704.00px;left:353.2px">20.93029</div>
<div class="v" style="top:704.00px;left:405.3px">19.60044</div>
<div class="v" style="top:704.00px;left:457.8px">18.39205</div>
<div class="v" style="top:704.00px;left:509.5px">17.29203</div>
<div class="v" style="top:704.00px;left:559.7px">16.28889</div>
<div class="v" style="top:704.00px;left:613.7px">15.37245</div>
<div class="v" style="top:704.00px;left:665.2px">14.53375</div>
<div class="v" style="top:704.00px;left:714.5px">13.76483</div>
<div class="v" style="top:704.00px;left:769.0px">12.40904</div>
<div class="v" style="top:704.00px;left:820.2px">11.25778</div>
<div class="v" style="top:704.00px;left:873.3px">10.27365</div>
<div class="v" style="top:704.00px;left:918.7px">9.42691</div>
<div class="v" style="top:704.00px;left:964.5px">8.69379</div>
<div class="v" style="top:704.00px;left:1009.0px">8.05518</div>
<div class="v" style="top:704.00px;left:1053.6px">4.97894</div>
<div class="n" style="top:720.85px;left:144.5px">40</div>
<div class="v" style="top:720.85px;left:198.0px">32.83469</div>
<div class="v" style="top:720.85px;left:250.0px">29.91585</div>
<div class="v" style="top:720.85px;left:300.3px">27.35548</div>
<div class="v" style="top:720.85px;left:353.2px">25.10278</div>
<div class="v" style="top:720.85px;left:405.3px">23.11477</div>
<div class="v" style="top:720.85px;left:457.8px">21.35507</div>
<div class="v" style="top:720.85px;left:509.5px">19.79277</div>
<div class="v" style="top:720.85px;left:559.7px">18.40158</div>
<div class="v" style="top:720.85px;left:613.7px">17.15909</div>
<div class="v" style="top:720.85px;left:665.2px">16.04612</div>
<div class="v" style="top:720.85px;left:714.5px">15.04630</div>
<div class="v" style="top:720.85px;left:769.0px">13.33171</div>
<div class="v" style="top:720.85px;left:820.2px">11.92461</div>
<div class="v" style="top:720.85px;left:873.3px">10.75736</div>
<div class="v" style="top:720.85px;left:918.7px">9.77905</div>
<div class="v" style="top:720.85px;left:964.5px">8.95105</div>
<div class="v" style="top:720.85px;left:1009.0px">8.24378</div>
<div class="v" style="top:720.85px;left:1053.6px">4.99660</div>
<div class="h" style="left:219.7px">1.0%</div>
<div class="h" style="left:271.7px">1.5%</div>
<div class="h" style="left:322.0px">2.0%</div>
<div class="h" style="left:374.9px">2.5%</div>
<div class="h" style="left:427.0px">3.0%</div>
<div class="h" style="left:479.5px">3.5%</div>
<div class="h" style="left:531.2px">4.0%</div>
<div class="h" style="left:581.4px">4.5%</div>
<div class="h" style="left:635.4px">5.0%</div>
<div class="h" style="left:686.9px">5.5%</div>
<div class="h" style="left:736.2px">6.0%</div>
<div class="h" style="left:790.7px">7.0%</div>
<div class="h" style="left:841.9px">8.0%</div>
<div class="h" style="left:895.0px">9.0%</div>
<div class="h" style="left:940.4px">10.0%</div>
<div class="h" style="left:986.2px">11.0%</div>
<div class="h" style="left:1030.7px">12.0%</div>
<div class="h" style="left:1075.3px">20.0%</div>

<svg class="a" style="left:660px;top:486px" width="14" height="26" viewBox="660 486 14 26"><path d="M664.5 489.5q2.5 0 3 1.5q.5-1.5 3-1.5M667.5 491v16M664.5 508.5q2.5 0 3-1.5q.5 1.5 3 1.5" fill="none" stroke="#000" stroke-width="1.1"/></svg>
<div id="status" class="a"></div>
<div id="done" class="a">Done</div>
<div id="taskbar" class="a"></div>
<div class="a" style="left:0;top:770px;width:91px;height:30px;border-radius:0 10px 10px 0;background:linear-gradient(#2c8a2c 0,#5cc05c 2px,#3aaa3a 5px,#2a9a2a 14px,#2aa02a 22px,#1e8a1e 30px);box-shadow:inset -2px 0 3px #186818"></div>
<div class="a" style="left:30px;top:774px;font-size:17px;line-height:20px;font-weight:bold;font-style:italic;color:#fff;text-shadow:1px 1px 1px #1a4a1a;letter-spacing:0.3px">start</div>
<div class="tb" style="left:287px;width:142px"></div>
<div class="tb" style="left:431px;width:144px"></div>
<div class="tb" style="left:577px;width:143px"></div>
<div class="tb" style="left:722px;width:147px;background:linear-gradient(#0a3cb8,#0e48cc 40%,#1050d4);box-shadow:inset 1px 1px 1px #082a90"></div>
<div class="tb" style="left:870px;width:144px"></div>

<svg class="a" style="left:0;top:770px" width="1276" height="30" viewBox="0 770 1276 30">
 <!-- windows logo -->
 <path d="M8 777q3-1.5 7 0l-1.2 6.5q-3.5-1.5-7 0z" fill="#f04a10"/>
 <path d="M16 777.2q3.5 1.5 7.5 0l-1.3 6.5q-3.8 1.5-7.4 0z" fill="#6ad020"/>
 <path d="M6.5 784.5q3.5-1.5 7 0l-1.2 6.5q-3.6-1.5-7 0z" fill="#3a8ef0"/>
 <path d="M14.7 784.7q3.6 1.5 7.4 0l-1.3 6.5q-3.7 1.5-7.3 0z" fill="#ffc820"/>
 <!-- quick launch -->
 <path d="M108.5 785.5h9.5q0-6-5-6t-5.5 6q0 5.5 5.5 5.5q3 0 4.5-2" fill="none" stroke="#1a78e0" stroke-width="2.6"/>
 <path d="M108.5 785.5h9.5q0-6-5-6t-5.5 6q0 5.5 5.5 5.5q3 0 4.5-2" fill="none" stroke="#7ad0ff" stroke-width="1"/>
 <path d="M105 792q-3-4 6-9.5q9-5 10.5-2.5" fill="none" stroke="#f4c830" stroke-width="1.6"/>
 <g transform="translate(129,774)"><circle cx="7" cy="11" r="7.5" fill="#e86a10"/><circle cx="8.5" cy="10" r="4.2" fill="#2a5aa8"/><circle cx="9.5" cy="9" r="2" fill="#5aa0e0"/><path d="M0.5 9q1-5 6-7q-2 3 0 5q-3 0-4 4q2 4 7 4.5q4 0 6-3q-1 5-7 5.5q-6 0-8-6z" fill="#f4a020"/><path d="M1 13q2 4 6 4.5q4 0 6.5-3.5q-1.5 4.5-6.5 5q-5 0-6-6z" fill="#c84808"/></g>
 <path d="M154.5 777.5h10l2 2v13h-12z" fill="#f4f8ff" stroke="#8ab0e0"/><rect x="152" y="780" width="9" height="9" fill="#2a5ab8"/><text x="152.5" y="787.5" font-family="Liberation Sans" font-weight="bold" font-size="9" fill="#fff">W</text><rect x="162" y="782" width="3" height="1" fill="#8ab"/><rect x="162" y="785" width="3" height="1" fill="#8ab"/>
 <path d="M177.5 777.5h10l2 2v13h-12z" fill="#f4fff4" stroke="#70b870"/><rect x="175" y="780" width="9" height="9" fill="#1a8a2a"/><text x="176.5" y="787.5" font-family="Liberation Sans" font-weight="bold" font-size="9" fill="#fff">X</text>
 <path d="M199.5 777.5h10l2 2v13h-12z" fill="#f8e0ec" stroke="#c84a88"/>
 <rect x="198" y="779" width="9" height="10" fill="#b02060"/>
 <circle cx="207" cy="782.5" r="3.5" fill="#fff"/><circle cx="207.5" cy="782" r="1.2" fill="#b02060"/>
 <path d="M205 785l-5.5 6" stroke="#fff" stroke-width="2.4"/>
 <path d="M222.5 777.5h10l2 2v13h-12z" fill="#fde8dc" stroke="#e06030"/>
 <rect x="221" y="779" width="10" height="10" fill="#e8501a"/>
 <circle cx="227" cy="785" r="3.2" fill="#fff"/><circle cx="227" cy="785" r="1.5" fill="#e8501a"/>
 <path d="M245.5 777.5h10l2 2v13h-12z" fill="#e8f4ff" stroke="#4a90d8"/>
 <rect x="244" y="779" width="9" height="9" fill="#2a7ad0"/>
 <path d="M246 786q1-4 5-4M249 780.5l2 1.5-2 1.5" fill="none" stroke="#fff" stroke-width="1.4"/>
 <!-- button icons -->
 <g transform="translate(297,773)"><circle cx="7" cy="11" r="7.5" fill="#e86a10"/><circle cx="8.5" cy="10" r="4.2" fill="#2a5aa8"/><circle cx="9.5" cy="9" r="2" fill="#5aa0e0"/><path d="M0.5 9q1-5 6-7q-2 3 0 5q-3 0-4 4q2 4 7 4.5q4 0 6-3q-1 5-7 5.5q-6 0-8-6z" fill="#f4a020"/><path d="M1 13q2 4 6 4.5q4 0 6.5-3.5q-1.5 4.5-6.5 5q-5 0-6-6z" fill="#c84808"/></g>
 <rect x="441.5" y="777.5" width="14" height="14" fill="#f06838" stroke="#e05020"/>
 <rect x="444.5" y="780.5" width="8" height="8" fill="#fff"/>
 <circle cx="448.5" cy="784.5" r="2.8" fill="#f06838"/><circle cx="448.5" cy="784.5" r="1.3" fill="#fff"/>
 <path d="M591.5 777.5h10l2 2v13h-12z" fill="#f4f8ff" stroke="#8ab0e0"/><rect x="589" y="780" width="9" height="9" fill="#2a5ab8"/><text x="589.5" y="787.5" font-family="Liberation Sans" font-weight="bold" font-size="9" fill="#fff">W</text><rect x="599" y="782" width="3" height="1" fill="#8ab"/><rect x="599" y="785" width="3" height="1" fill="#8ab"/>
 <g transform="translate(732,773)"><circle cx="7" cy="11" r="7.5" fill="#e86a10"/><circle cx="8.5" cy="10" r="4.2" fill="#2a5aa8"/><circle cx="9.5" cy="9" r="2" fill="#5aa0e0"/><path d="M0.5 9q1-5 6-7q-2 3 0 5q-3 0-4 4q2 4 7 4.5q4 0 6-3q-1 5-7 5.5q-6 0-8-6z" fill="#f4a020"/><path d="M1 13q2 4 6 4.5q4 0 6.5-3.5q-1.5 4.5-6.5 5q-5 0-6-6z" fill="#c84808"/></g>
 <path d="M881.5 777.5h10l2 2v13h-12z" fill="#f4fff4" stroke="#70b870"/><rect x="879" y="780" width="9" height="9" fill="#1a8a2a"/><text x="880.5" y="787.5" font-family="Liberation Sans" font-weight="bold" font-size="9" fill="#fff">X</text>
 <!-- help + restore -->
 <rect x="1025.5" y="778.5" width="12" height="12" fill="#f8f4c8" stroke="#222"/>
 <text x="1028" y="789" font-family="Liberation Sans" font-weight="bold" font-size="10" fill="#111">?</text>
 <rect x="1051.5" y="776.5" width="6" height="4" fill="none" stroke="#fff"/>
 <rect x="1049.5" y="778.5" width="6" height="4" fill="#2463e6" stroke="#fff"/>
 <path d="M1050 787h7l-3.5 3z" fill="#fff"/>
 <!-- tray -->
 <rect x="1075" y="771" width="201" height="29" fill="#0f9ef0"/>
 <rect x="1075" y="771" width="201" height="3" fill="#1aaaf8"/>
 <rect x="1075" y="796" width="201" height="4" fill="#0d88e0"/>
 <rect x="1075" y="771" width="1" height="29" fill="#0a60c0"/>
 <rect x="1076" y="771" width="1" height="29" fill="#40b8ff"/>
 <circle cx="1093.5" cy="785" r="7" fill="#e8e0c8" stroke="#a89870"/>
 <rect x="1088" y="783" width="11" height="4" fill="#7a9a58"/>
 <rect x="1104.5" y="777.5" width="15" height="15" fill="#fff" stroke="#3a6ab0"/>
 <path d="M1107 790l8-8" stroke="#1a4a90" stroke-width="2"/><circle cx="1115" cy="781.5" r="2.5" fill="none" stroke="#1a4a90" stroke-width="1.5"/>
 <path d="M1125 778h12v8q0 5-6 7q-6-2-6-7z" fill="#f4c838" stroke="#c09010"/>
 <path d="M1128 779v12M1131 779v13M1134 779v12" stroke="#d09a10"/>
 <circle cx="1147.5" cy="785" r="8" fill="#4ac030"/>
 <circle cx="1146" cy="783" r="5" fill="#8ae060"/>
 <text x="1142" y="790" font-family="Liberation Sans" font-weight="bold" font-size="11" fill="#fff">A</text>
 <rect x="1158" y="777" width="16" height="16" fill="#1a8ae0" stroke="#fff" stroke-width="1"/>
 <text x="1161" y="791" font-family="Liberation Sans" font-weight="bold" font-size="13" fill="#fff">Z</text>
 <circle cx="1183" cy="784" r="6.5" fill="#3a4048"/><circle cx="1181.5" cy="782.5" r="2.5" fill="#c0c8d0"/>
 <path d="M1185 792l5-4" stroke="#9ab" stroke-width="1"/>
 <path d="M1196 792v-14h3l5 9v-9h3v14h-3l-5-9v9z" fill="#e01818"/>
</svg>
<div class="tbt" style="left:315px">BA 213 W11 (Pasc...</div>
<div class="tbt" style="left:460px">Microsoft PowerPo...</div>
<div class="tbt" style="left:607px">Time_value_of_mo...</div>
<div class="tbt" style="left:753px">PVA-PresentValue...</div>
<div class="tbt" style="left:898px">Microsoft Excel - r...</div>
<div class="tbt" style="left:1217px;top:779px;letter-spacing:0">11:14 AM</div>

</body></html>
